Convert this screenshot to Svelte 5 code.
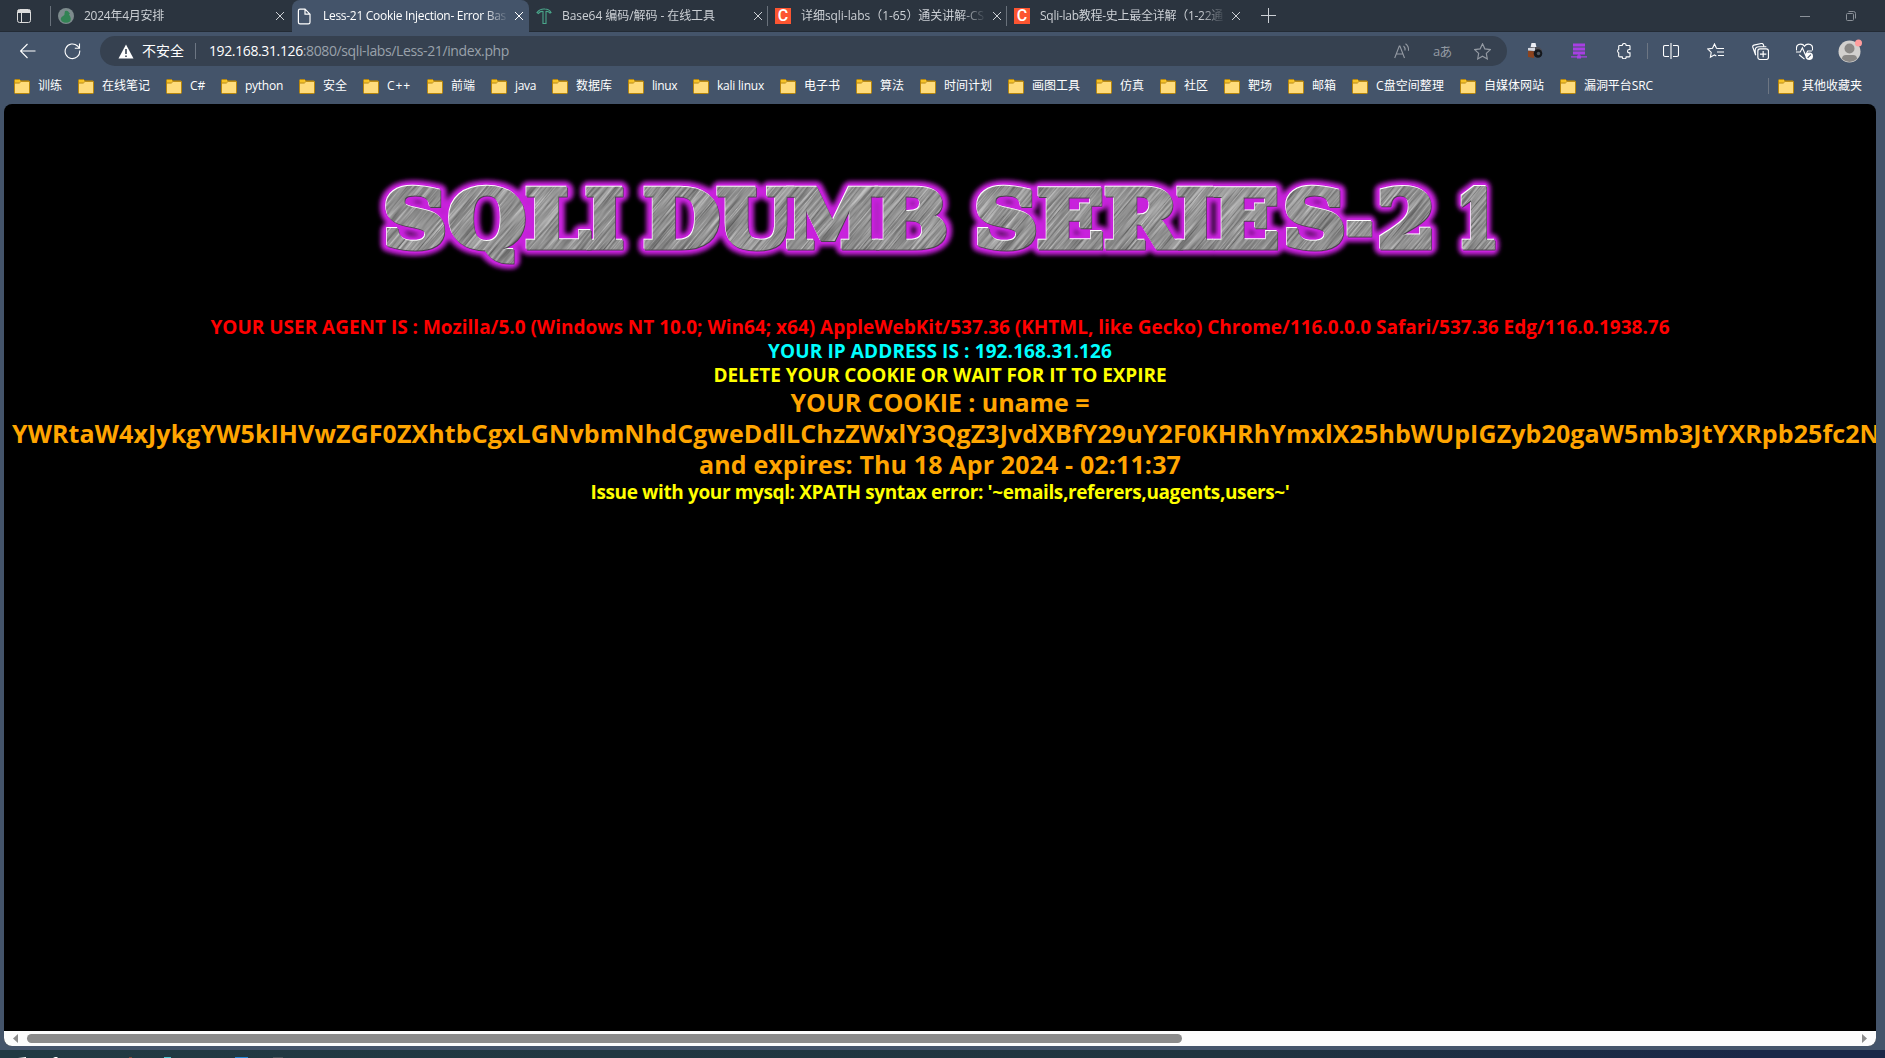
<script>
  const tabs = [
    { title: '2024年4月安排', icon: 'bird', width: 80 },
    { title: 'Less-21 Cookie Injection- Error Bas', icon: 'file', width: 183, active: true },
    { title: 'Base64 编码/解码 - 在线工具', icon: 'tool', width: 153 },
    { title: '详细sqli-labs（1-65）通关讲解-CS', icon: 'csdn', width: 183 },
    { title: 'Sqli-lab教程-史上最全详解（1-22通', icon: 'csdn', width: 183 }
  ];

  const bookmarks = [
    ['训练', 24], ['在线笔记', 48], ['C#', 15], ['python', 38], ['安全', 24], ['C++', 24],
    ['前端', 24], ['java', 21], ['数据库', 36], ['linux', 25], ['kali linux', 47], ['电子书', 36],
    ['算法', 24], ['时间计划', 48], ['画图工具', 48], ['仿真', 24], ['社区', 24], ['靶场', 24],
    ['邮箱', 24], ['C盘空间整理', 68], ['自媒体网站', 60], ['漏洞平台SRC', 69]
  ];

  const lines = [
    { text: 'YOUR USER AGENT IS : Mozilla/5.0 (Windows NT 10.0; Win64; x64) AppleWebKit/537.36 (KHTML, like Gecko) Chrome/116.0.0.0 Safari/537.36 Edg/116.0.1938.76', kind: 'red', width: 1459 },
    { text: 'YOUR IP ADDRESS IS : 192.168.31.126', kind: 'cyan', width: 344 },
    { text: 'DELETE YOUR COOKIE OR WAIT FOR IT TO EXPIRE', kind: 'yellow', width: 453 },
    { text: 'YOUR COOKIE : uname =', kind: 'orange', width: 299 },
    { text: 'YWRtaW4xJykgYW5kIHVwZGF0ZXhtbCgxLGNvbmNhdCgweDdlLChzZWxlY3QgZ3JvdXBfY29uY2F0KHRhYmxlX25hbWUpIGZyb20gaW5mb3JtYXRpb25fc2N', kind: 'orange long', width: 1868 },
    { text: 'and expires: Thu 18 Apr 2024 - 02:11:37', kind: 'orange', width: 482 },
    { text: "Issue with your mysql: XPATH syntax error: '~emails,referers,uagents,users~'", kind: 'yellow', width: 699 }
  ];

  // letter, left edge, width
  const banner = [
    ['S', 385, 60], ['Q', 450, 74], ['L', 527, 61], ['I', 587, 35], ['D', 645, 73], ['U', 719, 73],
    ['M', 788, 90], ['B', 876, 70], ['S', 976, 60], ['E', 1039, 63], ['R', 1106, 71], ['I', 1178, 35],
    ['E', 1214, 63], ['S', 1285, 59], ['-', 1348, 23], ['2', 1379, 55], ['1', 1461, 35]
  ];

  // Spreads the letters so that the run takes the given width.
  function fit(node, width) {
    const natural = node.getBoundingClientRect().width;
    node.style.letterSpacing = `${(width - natural) / node.textContent.length}px`;
  }
</script>

{#snippet folder()}
  <svg class="folder" viewBox="0 0 16 15" width="16" height="15">
    <path d="M.5 1.5q0-1 1-1h4l1.5 1.5h7.5q1 0 1 1v10.500q0 1-1 1h-13q-1 0-1-1z" fill="#ffdc7c" stroke="#b8860b" />
    <path d="M1 1h4.500l1 1.200-1.500 1.600h-4z" fill="#f7c325" />
    <path d="M.8 4h4.500l1.800-1.700h8" fill="none" stroke="#b8860b" />
  </svg>
{/snippet}

<div class="browser">
  <div class="tabstrip">
    <div class="workspace">
      <svg viewBox="0 0 14 14" width="14" height="14"><rect x=".5" y=".5" width="13" height="13" rx="2" fill="none" stroke="#ddd" /><path d="M1 3.500h12M4.500 3v10" stroke="#ddd" fill="none" /><path d="M1 2h12" stroke="#ddd" stroke-width="2" /></svg>
    </div>
    {#each tabs as tab, i}
      <div class="tab" class:active={tab.active} class:bare={i === 2}>
        <span class="favicon">
          {#if tab.icon === 'bird'}
            <svg viewBox="0 0 16 16" width="16" height="16"><circle cx="8" cy="8" r="8" fill="#7d8b8d" /><path d="M7 3q3-1 4 1.500l1 1-1 1q3 4 1 7-4 2.500-8 0-3-3 1-5.500 2-1 1.500-2.500z" fill="#338354" /></svg>
          {:else if tab.icon === 'file'}
            <svg viewBox="0 0 14 16" width="14" height="17"><path d="M3 .7h5l5 5v8q0 1.600-1.600 1.600h-8.400q-1.600 0-1.600-1.600v-11.400q0-1.600 1.600-1.600zM8 .7v5h5" fill="none" stroke="#fff" stroke-width="1.200" /></svg>
          {:else if tab.icon === 'tool'}
            <svg viewBox="0 0 16 16" width="16" height="16"><path d="M1 4.500q3-4 8-3.500 4 0 6 3.500l-1 .5q-2-2-4-1.500v12h-3v-12q-3-.5-4.500 2z" fill="none" stroke="#4aa78b" stroke-width="1.100" /></svg>
          {:else}
            <span class="csdn">C</span>
          {/if}
        </span>
        <span class="title"><span class="run" use:fit={tab.width}>{tab.title}</span></span>
        <svg class="close" viewBox="0 0 10 10" width="10" height="10"><path d="M1 1l8 8M9 1l-8 8" /></svg>
      </div>
    {/each}
    <div class="newtab"><svg viewBox="0 0 15 15" width="15" height="15"><path d="M7.500 0v15M0 7.500h15" stroke="#ccd0d5" /></svg></div>
    <div class="window">
      <svg viewBox="0 0 10 10" width="10" height="10"><path d="M0 5.500h10" stroke="#8b9199" /></svg>
      <svg viewBox="0 0 10 10" width="10" height="10"><path d="M2.500.5h5q2 0 2 2v5" stroke="#8b9199" fill="none" /><rect x=".5" y="2.500" width="7" height="7" rx="1" stroke="#8b9199" fill="none" /></svg>
    </div>
  </div>

  <div class="toolbar">
    <svg class="back" viewBox="0 0 16 16" width="16" height="16"><path d="M15.500 8h-15M7.500 1l-7 7 7 7" /></svg>
    <svg class="reload" viewBox="0 0 17 17" width="17" height="17"><path d="M15.700 7.500a7.300 7.300 0 1 1-2.200-4.500l1.800 2M15.500.5v4.700h-4.700" /></svg>
    <div class="address">
      <svg viewBox="0 0 16 15" width="16" height="15"><path d="M8 .5l7.500 14h-15z" fill="#fff" stroke="#fff" stroke-linejoin="round" /><path d="M8 5v5M8 11.500v1.500" stroke="#364150" stroke-width="1.600" /></svg>
      <span class="unsafe">不安全</span>
      <i></i>
      <span class="run" use:fit={300}>192.168.31.126<em>:8080/sqli-labs/Less-21/index.php</em></span>
      <div class="actions">
        <svg viewBox="0 0 16 16" width="16" height="16"><path d="M.7 15l4.600-12h.6l4.600 12M2.300 11h6.700M9.500 3q2 1.600 1.500 4.500M11.500.8q3.500 2.500 3 7" /></svg>
        <span class="translate">aあ</span>
        <svg viewBox="0 0 16 16" width="17" height="17"><path d="M8 .8l2.200 4.700 5.100.7-3.700 3.600.9 5.200-4.500-2.500-4.500 2.500.9-5.200-3.700-3.600 5.100-.7z" /></svg>
      </div>
    </div>
    <div class="tools">
      <svg class="camera" viewBox="0 0 16 16" width="16" height="16"><path d="M4.500 0h4l1 4.500h-6z" fill="#eceef4" /><path d="M1 6l3-2h8l3 3v5h-14z" fill="#4a4b53" /><path d="M1 7.500l6 1v6.500l-6-1z" fill="#8b431f" /><path d="M1 5l7-.5v3.500l-7-.5z" fill="#d5d8e0" /><circle cx="11" cy="10.500" r="4.300" fill="#15181d" /><circle cx="11.500" cy="10.500" r="1.700" fill="#4d5660" /></svg>
      <svg viewBox="0 0 16 16" width="16" height="16"><path d="M2 .5h12v3h-12zM2 4.500h12v3h-12zM2 8.500h12v3h-12zM7.300 11h1.400v2.500h-1.400zM0 13.200h16v1.200h-16zM6 12.500h4v3h-4z" fill="#a83fe3" /></svg>
      <svg viewBox="0 0 16 16" width="16" height="16"><path d="M3.500 2.500h2.700a2 2 0 0 1 4 0h3q.8 0 .8.800v3.200h-.8a1.700 1.700 0 0 0 0 3.400h.8v3.200q0 .8-.8.800h-3a2 2 0 0 1-4 0h-2.700q-.8 0-.8-.8v-3.200a2 2 0 0 1 0-3.600v-3q0-.8.8-.8z" /></svg>
      <i></i>
      <svg viewBox="0 0 16 16" width="16" height="16"><path d="M6 2.500h-4q-1.500 0-1.500 1.500v8q0 1.500 1.500 1.500h4M8 0v16M10 2.500h4q1.500 0 1.500 1.500v8q0 1.500-1.500 1.500h-4" /></svg>
      <svg viewBox="0 0 17 16" width="17" height="16"><path d="M11 5.500l-1.500-.2-2-4.300-2 4.300-4.800.7 3.500 3.400-.8 4.900 4.100-2.400 1.800 1M11 5.500h6M10 9h7M11 12.500h6" /></svg>
      <svg viewBox="0 0 16 16" width="17" height="17"><rect x="5.500" y="5.500" width="10" height="10" rx="2" /><path d="M10.500 7.500v6M7.500 10.500h6M3.500 11.500l-2.700-7.500q-.5-1.500 1-2l7-1.500q1.200-.2 1.800.8l.6 1.700M3.500 11.500q-.5-1-.5-4.500 0-3.500 3.500-3.500h7" /></svg>
      <svg viewBox="0 0 16 16" width="17" height="17"><path d="M.5 7q-.8-6 4-6 2.300 0 3.500 2 1.200-2 3.500-2 4.800 0 4 6M0 8.500h4l2-4 3 7 2-4h4M3 11l5 4.200" /><circle class="badge" cx="12.500" cy="12.500" r="3.500" fill="#fff" /><path d="M11 14l3-3" stroke="#44546a" /></svg>
      <svg class="avatar" viewBox="0 0 24 24" width="24" height="24"><circle cx="11.500" cy="12.500" r="11" fill="#d2d0ce" /><circle cx="11.500" cy="9.500" r="5" fill="#8a8886" /><path d="M4 20q0-4 4-4h7q4 0 4 4-7.500 6-15 0z" fill="#8a8886" /><circle cx="20.500" cy="4" r="3.500" fill="#ff9d9d" /></svg>
    </div>
  </div>

  <div class="bookmarks">
    {#each bookmarks as [name, width]}
      <div class="bookmark">{@render folder()}<span class="run" use:fit={width}>{name}</span></div>
    {/each}
    <div class="bookmark other">{@render folder()}<span class="run">其他收藏夹</span></div>
  </div>

  <div class="page">
    <div class="content">
      <svg class="banner" viewBox="366 170 1150 110" width="1150" height="110">
        <defs>
          <filter id="glow" x="-5%" y="-30%" width="110%" height="160%"><feGaussianBlur stdDeviation="2" /></filter>
          <filter id="brushed" x="0" y="0" width="100%" height="100%" color-interpolation-filters="sRGB">
            <feTurbulence type="fractalNoise" baseFrequency="0.018 0.55" numOctaves="3" seed="4" />
            <feColorMatrix values=".62 0 0 0 .26  .62 0 0 0 .26  .62 0 0 0 .26  0 0 0 0 1" />
          </filter>
          <g id="word">
            {#each banner as [letter, x, width]}
              <text x={x - (letter === '1' ? 5 : 2)} y={letter === '-' ? 249 : 246} textLength={width + (letter === '1' ? 8 : 4)} lengthAdjust="spacingAndGlyphs">{letter}</text>
            {/each}
          </g>
          <mask id="cut" maskUnits="userSpaceOnUse" x="366" y="170" width="1150" height="110"><use href="#word" class="stencil" /></mask>
        </defs>
        <use href="#word" class="halo" filter="url(#glow)" />
        <use href="#word" class="halo core" />
        <use href="#word" class="light" transform="translate(-.7 -.7)" />
        <use href="#word" class="shade" transform="translate(.7 .7)" />
        <g mask="url(#cut)">
          <rect x="366" y="170" width="1150" height="110" fill="#929292" />
          <g transform="rotate(-50 940 225)"><rect x="480" y="-300" width="920" height="1050" filter="url(#brushed)" /></g>
        </g>
      </svg>
      <div class="message">
        {#each lines as line}
          <div class="line {line.kind}"><span class="run" use:fit={line.width}>{line.text}</span></div>
        {/each}
      </div>
    </div>
    <div class="scrollbar">
      <svg viewBox="0 0 5 9" width="5" height="9"><path d="M5 0v9l-5-4.500z" fill="#8b8b8b" /></svg>
      <div class="thumb"></div>
      <svg viewBox="0 0 5 9" width="5" height="9"><path d="M0 0v9l5-4.500z" fill="#8b8b8b" /></svg>
    </div>
  </div>

  <div class="taskbar">
    <svg viewBox="0 0 300 8" width="300" height="8"><path d="M18 8l8-1v1zM53 8l2-1h2l1 1z" fill="#fff" /><path d="M129 7h3v1h-3z" fill="#7d4a3c" /><path d="M164 7h7v1h-7z" fill="#4ec5d2" /><path d="M235 7h13v1h-13z" fill="#2488d8" /><path d="M273 7h10v1h-10z" fill="#48545c" /></svg>
  </div>
</div>

<style>
  :global(body) { margin: 0; overflow: hidden; }
  .browser {
    width: 1885px; height: 1058px; display: flex; flex-direction: column; overflow: hidden;
    background: #44546a; color: #fff;
    font: 12px/16px "Open Sans", "Noto Sans CJK SC", sans-serif;
  }
  svg { display: block; flex: none; }
  .run { display: inline-block; white-space: pre; }

  .tabstrip { height: 32px; flex: none; display: flex; background: #2b343f; box-shadow: inset 0 -1px #232b35; }
  .workspace { width: 34px; padding: 9px 0 0 17px; }
  .tab { position: relative; width: 239px; height: 32px; box-sizing: border-box; display: flex; align-items: center; padding: 0 5px 0 7px; color: #ccd0d5; }
  .tab::before { content: ""; position: absolute; left: -1px; top: 6px; width: 1px; height: 20px; background: #69717b; }
  .tab.active::before, .tab.bare::before { display: none; }
  .tab.active { background: #44546a; color: #fff; border-radius: 8px 8px 0 0; margin: 0 0 0 2px; width: 237px; padding-left: 5px; }
  .favicon { width: 17px; display: flex; }
  .csdn { width: 16px; height: 16px; background: #fc5531; color: #fff; text-align: center; font: 500 16px/16px Roboto, sans-serif; }
  .title { width: 185px; margin-left: 9px; white-space: nowrap; -webkit-mask-image: linear-gradient(90deg, #000 160px, transparent 186px); mask-image: linear-gradient(90deg, #000 160px, transparent 186px); }
  .close { margin-left: auto; fill: none; stroke: currentColor; }
  .newtab { padding: 8px 0 0 15px; }
  .window { margin-left: auto; display: flex; gap: 36px; padding: 11px 29px 0 0; }

  .toolbar { height: 38px; flex: none; display: flex; align-items: center; padding-left: 20px; }
  .toolbar svg { fill: none; stroke: #fff; stroke-width: 1.1; }
  .toolbar svg :global(path[fill]), .avatar circle, .camera circle, .toolbar .badge { stroke: none; }
  .reload { margin-left: 28px; }
  .address { width: 1407px; height: 30px; margin: 0 5px 0 19px; box-sizing: border-box; padding: 0 16px 0 18px; display: flex; align-items: center; border-radius: 15px; background: #364150; font-size: 14px; }
  .unsafe { width: 43px; margin-left: 8px; white-space: nowrap; }
  .address i, .tools i { width: 1px; height: 16px; background: #6d7683; }
  .address i { margin: 0 13px 0 10px; }
  em { font-style: normal; color: #9aa1ab; }
  .actions { margin-left: auto; display: flex; align-items: center; gap: 23px; color: #949aa3; }
  .actions svg { stroke: #949aa3; }
  .translate { width: 18px; font-size: 13px; line-height: 14px; white-space: nowrap; letter-spacing: -1px; }
  .tools { display: grid; grid-template-columns: 45px 44px 45px 3px 44px 45px 44px 44px 47px; align-items: center; justify-items: center; }

  .bookmarks { height: 34px; flex: none; display: flex; align-items: center; gap: 16px; padding: 0 23px 2px 14px; box-sizing: border-box; }
  .bookmark { display: flex; align-items: center; gap: 8px; white-space: nowrap; }
  .other { margin-left: auto; padding-left: 9px; border-left: 1px solid #6d7683; }

  .page { width: 1872px; height: 942px; margin-left: 4px; display: flex; flex-direction: column; overflow: hidden; border-radius: 8px; background: #000; flex: none; }
  .content { flex: 1; overflow: hidden; }
  .banner { margin: 67px 0 0 362px; }
  .banner text { font: 700 78px "DejaVu Serif", serif; }
  .halo { fill: #c822dc; stroke: #c822dc; stroke-width: 16px; stroke-linejoin: round; }
  .core { stroke-width: 10px; }
  .light { fill: #fff; stroke: #fff; stroke-width: 5px; }
  .shade { fill: #4b444d; stroke: #4b444d; stroke-width: 5px; }
  .stencil { fill: #fff; stroke: #fff; stroke-width: 5px; }
  .message { display: flex; flex-direction: column; align-items: center; padding-top: 34px; font-family: "Open Sans", "Noto Sans", sans-serif; font-weight: 700; }
  .line { height: 24px; font-size: 19px; line-height: 24px; white-space: nowrap; }
  .orange { height: 31px; font-size: 25px; line-height: 31px; color: #ffa500; }
  .long { align-self: flex-start; margin-left: 8px; }
  .red { color: #f00; }
  .cyan { color: #0ff; }
  .yellow { color: #ff0; }
  .scrollbar { height: 15px; flex: none; display: flex; align-items: center; padding: 0 9px; background: #fcfcfc; }
  .thumb { width: 1155px; height: 9px; margin: 0 auto 0 9px; border-radius: 5px; background: #8b8b8b; }
  .taskbar { height: 8px; margin-top: auto; background: linear-gradient(90deg, #213a43 0, #20343f 65%, #1a2747 93%); }
</style>
